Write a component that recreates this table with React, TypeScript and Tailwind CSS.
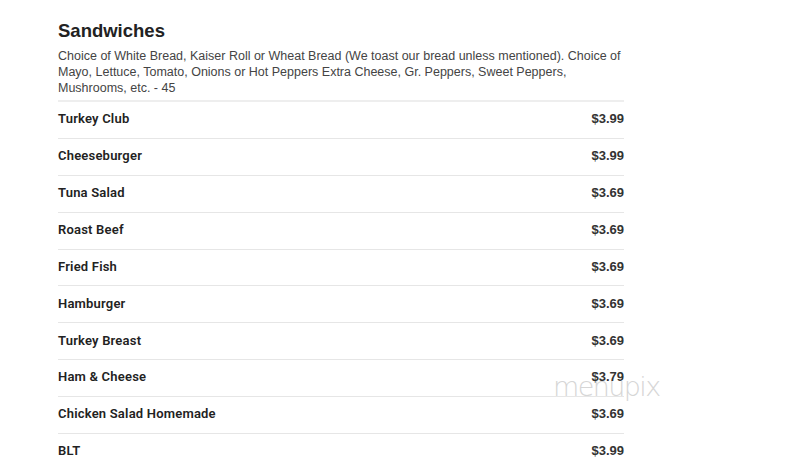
const items = [
  { name: 'Turkey Club', price: '$3.99' },
  { name: 'Cheeseburger', price: '$3.99' },
  { name: 'Tuna Salad', price: '$3.69' },
  { name: 'Roast Beef', price: '$3.69' },
  { name: 'Fried Fish', price: '$3.69' },
  { name: 'Hamburger', price: '$3.69' },
  { name: 'Turkey Breast', price: '$3.69' },
  { name: 'Ham & Cheese', price: '$3.79' },
  { name: 'Chicken Salad Homemade', price: '$3.69' },
  { name: 'BLT', price: '$3.99' },
];

export default function App() {
  return (
    <div className="relative w-[785px] h-[469px] overflow-hidden bg-white text-[#333] font-['Liberation_Sans',Arial,sans-serif]">
      {/* watermark sits under the menu text */}
      <div className="absolute left-[553px] top-[373px] font-['DejaVu_Sans',sans-serif] font-extralight text-[27px] leading-none tracking-[-1.6px] text-[#d6d6d6] select-none">
        menupix
      </div>
      <div className="relative w-[566px] ml-[58px] pt-[19px]">
        <h2 className="text-[18.5px] font-bold leading-[24px] text-[#222]">Sandwiches</h2>
        <p className="mt-[5px] text-[12.5px] leading-[16px] text-[#444]">
          Choice of White Bread, Kaiser Roll or Wheat Bread (We toast our bread unless mentioned). Choice of
          Mayo, Lettuce, Tomato, Onions or Hot Peppers Extra Cheese, Gr. Peppers, Sweet Peppers,
          Mushrooms, etc. - 45
        </p>
        <ul className="mt-[4px] border-t-2 border-[#eeeeee]">
          {items.map((item) => (
            <li
              key={item.name}
              className="flex items-center justify-between h-[36.9px] pb-[2px] border-b border-[#e6e6e6]"
            >
              <span className="font-['Roboto',sans-serif] font-semibold text-[13px] tracking-[0.2px] text-[#222]">
                {item.name}
              </span>
              <span className="font-bold text-[13px] text-[#333]">{item.price}</span>
            </li>
          ))}
        </ul>
      </div>
    </div>
  );
}
